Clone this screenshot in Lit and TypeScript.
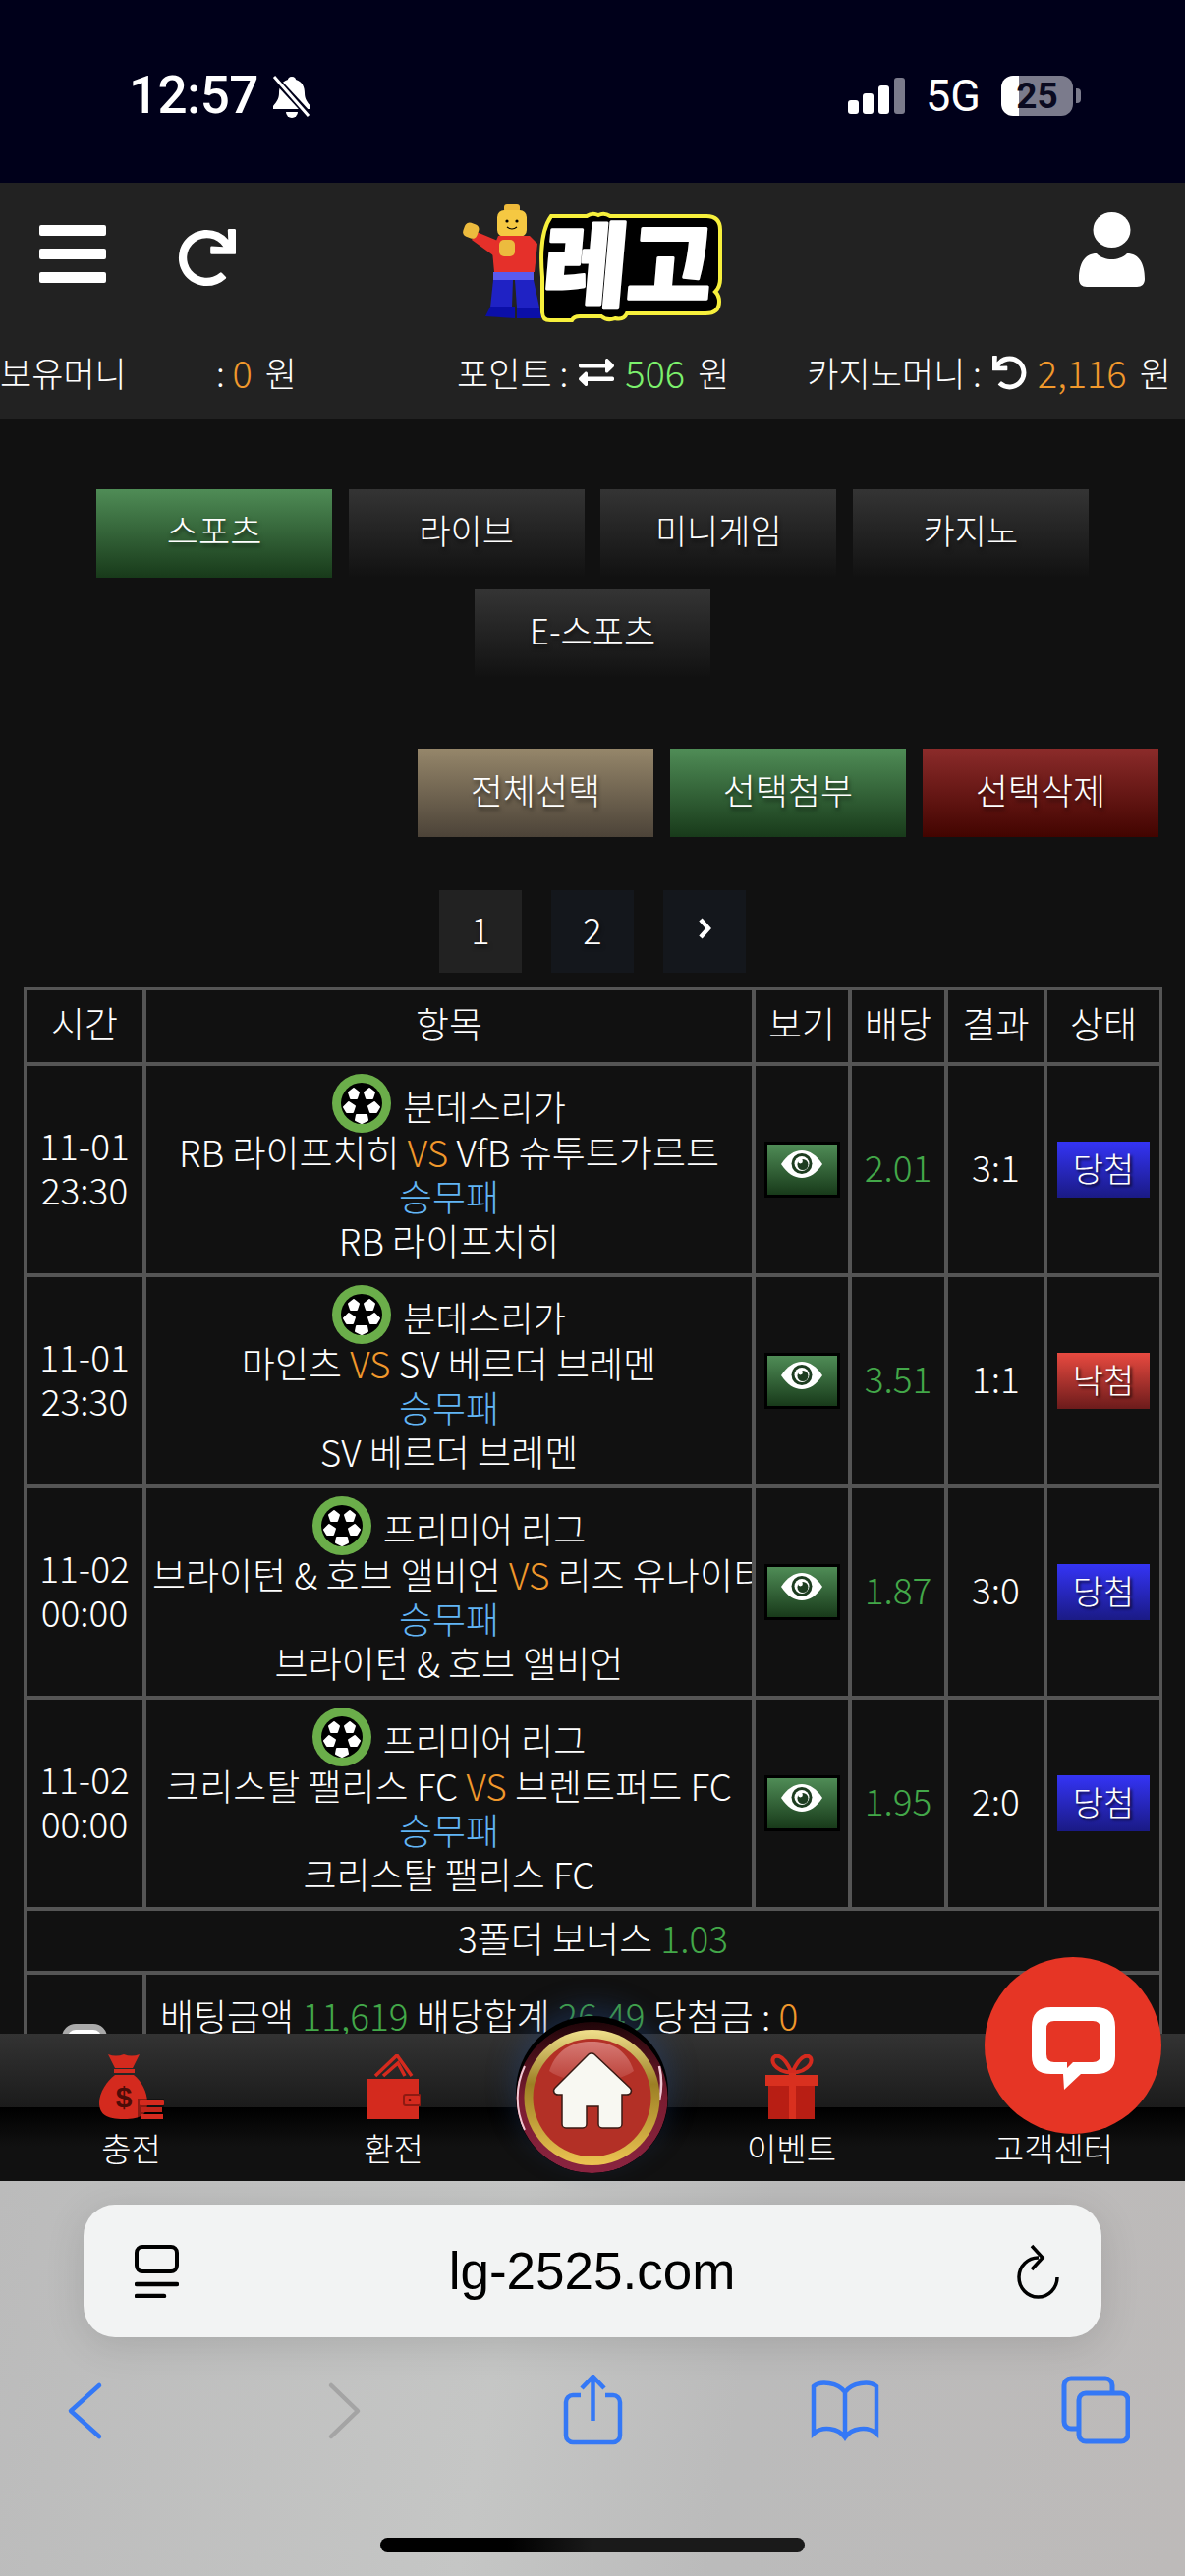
import { LitElement, html, css } from 'lit';
import { customElement } from 'lit/decorators.js';

const REDO = 'M500.33 0h-47.41a12 12 0 0 0-12 12.57l4 82.76A247.42 247.42 0 0 0 256 8C119.34 8 8.05 119.53 8 256.19 8 393 119.1 504 256 504a247.1 247.1 0 0 0 166.18-63.91 12 12 0 0 0 .48-17.43l-34-34a12 12 0 0 0-16.38-.55A176 176 0 1 1 402.1 157.8l-101.53-4.87a12 12 0 0 0-12.57 12v47.41a12 12 0 0 0 12 12h200.33a12 12 0 0 0 12-12V12a12 12 0 0 0-12-12z';

const ROWS = [
  { date: '11-01', time: '23:30', league: '분데스리가', home: 'RB 라이프치히', away: 'VfB 슈투트가르트', pick: 'RB 라이프치히', odds: '2.01', score: '3:1', won: true },
  { date: '11-01', time: '23:30', league: '분데스리가', home: '마인츠', away: 'SV 베르더 브레멘', pick: 'SV 베르더 브레멘', odds: '3.51', score: '1:1', won: false },
  { date: '11-02', time: '00:00', league: '프리미어 리그', home: '브라이턴 & 호브 앨비언', away: '리즈 유나이티드', pick: '브라이턴 & 호브 앨비언', odds: '1.87', score: '3:0', won: true },
  { date: '11-02', time: '00:00', league: '프리미어 리그', home: '크리스탈 팰리스 FC', away: '브렌트퍼드 FC', pick: '크리스탈 팰리스 FC', odds: '1.95', score: '2:0', won: true },
];

@customElement('app-root')
export class AppRoot extends LitElement {
  static styles = css`
    :host {
      display: block;
      width: 1206px;
      height: 2622px;
      overflow: hidden;
      position: relative;
      background: #111;
      color: #fff;
      font-family: "Noto Sans CJK KR", "Noto Sans", sans-serif;
      font-weight: 300;
      font-size: 35px;
      --orange: #f0982c;
      --green: #43a849;
    }
    svg { display: block; flex: none; }

    .status {
      height: 186px;
      background: #00001a;
      display: flex;
      align-items: flex-start;
      font-family: Roboto, sans-serif;
      font-weight: 500;
    }
    .clock { margin: 66px 0 0 131px; font-size: 53px; line-height: 62px; letter-spacing: -0.5px; }
    .bell { margin: 77px 0 0 14px; }
    .signal { margin: 79px 0 0 auto; }
    .net { margin: 72px 0 0 21px; font-size: 45px; line-height: 52px; font-weight: 400; }
    .battery {
      margin: 77px 0 0 21px;
      width: 73px;
      height: 41px;
      border-radius: 12px;
      background: linear-gradient(90deg, #fff 18px, #7b7b8c 18px);
      color: #0a0a20;
      font-size: 37px;
      font-weight: 700;
      line-height: 41px;
      text-align: center;
    }
    .nub { margin: 90px 106px 0 3px; width: 5px; height: 15px; border-radius: 0 4px 4px 0; background: #7b7b8c; }

    .header { height: 240px; background: #222; }
    .bar { height: 166px; display: grid; grid-template-columns: 1fr auto 1fr; align-items: start; }
    .bar-left { display: flex; align-items: flex-start; padding-left: 40px; }
    .menu { margin-top: 43px; width: 68px; display: flex; flex-direction: column; gap: 13px; }
    .menu i { display: block; height: 11px; background: #fff; border-radius: 2px; }
    .reload { margin: 47px 0 0 73px; }
    .logo { margin-top: 22px; overflow: visible; }
    .user { justify-self: end; margin: 30px 41px 0 0; }
    .money { height: 58px; display: flex; align-items: center; white-space: nowrap; line-height: 58px; padding-bottom: 4px; box-sizing: border-box; }
    .money > span { display: flex; align-items: center; }
    .money svg { margin: 0 11px; }
    .m1 .lbl { width: 220px; }
    .m2 { margin-left: 163px; }
    .m3 { margin-left: 79px; }
    .money b { font-weight: 300; font-size: 38px; margin: 0 13px 0 0; }
    .orange { color: var(--orange); }
    .lime { color: #7cf06c; }
    .green { color: var(--green); }
    .blue { color: #62b5f5; }

    .main { height: 1644px; overflow: hidden; }
    .tabs { padding: 72px 98px 0; display: flex; flex-wrap: wrap; justify-content: center; gap: 12px 16.6px; }
    .btn {
      width: 240px;
      height: 90px;
      display: flex;
      align-items: center;
      justify-content: center;
      padding-bottom: 9px;
      box-sizing: border-box;
      font-size: 35px;
      text-shadow: 1px 3px 4px rgba(0,0,0,.6);
    }
    .dark { background: linear-gradient(#343434, #111); }
    .grn { background: linear-gradient(#4f8c56, #183a1a); }
    .tan { background: linear-gradient(#95866a, #4c4338); }
    .red { background: linear-gradient(#8b2b2a, #420400); }
    .actions { margin-top: 72px; padding-right: 27px; display: flex; justify-content: flex-end; gap: 17px; }
    .actions .btn { font-size: 36px; }
    .pages { margin-top: 54px; display: flex; justify-content: center; gap: 30px; }
    .pages span {
      width: 84px;
      height: 84px;
      background: #14171c;
      display: flex;
      align-items: center;
      justify-content: center;
      padding-bottom: 6px;
      box-sizing: border-box;
      font-size: 36px;
      text-shadow: 1px 3px 4px rgba(0,0,0,.6);
    }
    .pages .on { background: #222; }

    table {
      margin: 15px 0 0 24px;
      width: 1159px;
      table-layout: fixed;
      border-collapse: separate;
      border-spacing: 0;
      border: 1px solid #555;
      font-size: 37px;
      line-height: 45px;
      text-align: center;
    }
    th, td { border: 2px solid #555; padding: 0; font-weight: 300; overflow: hidden; white-space: nowrap; }
    th { height: 77px; box-sizing: border-box; padding-bottom: 6px; }
    .txt { padding-bottom: 6px; }
    .game td { height: 215px; box-sizing: border-box; }
    .game .item { padding: 8px 6px 11px; }
    .league { height: 60px; margin-bottom: -3px; display: flex; justify-content: center; gap: 12px; line-height: 64px; font-size: 36px; }
    .eye { width: 77px; height: 57px; margin: 0 auto; box-sizing: border-box; border: 3px solid #000; background: linear-gradient(#4f8c56, #183a1a); display: flex; justify-content: center; padding-top: 6px; }
    .badge { width: 94px; height: 57px; margin: 0 0 0 10px; display: flex; align-items: center; justify-content: center; padding-bottom: 4px; box-sizing: border-box; font-size: 34px; text-shadow: 2px 2px 3px rgba(0,0,0,.8); }
    .won { background: linear-gradient(#3434f5, #1a1a85); }
    .lost { background: linear-gradient(#e84a40, #6c1b1b); }
    .bonus td { height: 65px; box-sizing: border-box; padding-bottom: 6px; }
    .sum td { vertical-align: top; height: 200px; box-sizing: border-box; }
    .sum .tot { text-align: left; padding: 19px 0 0 14px; }
    .check { width: 46px; height: 46px; margin: 50px 0 0 36px; box-sizing: border-box; border: 6px solid #aaa; border-radius: 14px; background: #fff; }

    .nav {
      height: 150px;
      position: relative;
      display: grid;
      grid-template-columns: 267px 267px 1fr 267px 267px;
      background: linear-gradient(#333 0, #1b1b1b 75px, #000 75px, #111 115px);
    }
    .nav a { display: flex; flex-direction: column; align-items: center; padding-top: 21px; font-size: 33px; line-height: 44px; gap: 7px; }
    .nav a svg { height: 66px; }
    .nav a.bare { padding-top: 94px; }
    .home { position: absolute; left: 525px; top: -12px; border-radius: 50%; background: #000; box-shadow: 0 -6px 0 #000, 0 -14px 30px rgba(35,70,130,.45); }
    .chat { position: absolute; left: 1002px; top: 1992px; width: 180px; height: 180px; border-radius: 50%; background: #e63525; display: flex; justify-content: center; padding-top: 51px; box-sizing: border-box; }

    .safari {
      height: 402px;
      background: linear-gradient(100deg, #bbbbbb, #c5c6c5 42%, #bbbbbb 62%, #bdbab9);
      display: flex;
      flex-direction: column;
    }
    .url {
      margin: 24px 0 0 85px;
      width: 1036px;
      height: 135px;
      border-radius: 32px;
      background: #f2f3f3;
      box-shadow: 0 8px 40px rgba(0,0,0,.12);
      display: grid;
      grid-template-columns: 1fr auto 1fr;
      align-items: center;
      padding: 0 43px 0 52px;
      box-sizing: border-box;
    }
    .url span { font-family: "Liberation Sans", sans-serif; font-weight: 400; font-size: 53px; color: #000; line-height: 60px; position: relative; left: -5px; }
    .url svg:last-child { justify-self: end; }
    .tools { margin-top: 38px; display: flex; }
    .t1 { margin-left: 51px; }
    .t2 { margin-left: 194px; }
    .t3 { margin-left: 183px; }
    .t4 { margin-left: 187px; }
    .t5 { margin-left: 185px; }
    .grabber { margin: 94px auto 0; width: 432px; height: 15px; border-radius: 8px; background: linear-gradient(90deg, #000 30%, #1a1a1a 50%); }
  `;

  ball() {
    return html`<svg width="60" height="60" viewBox="0 0 60 60">
      <circle cx="30" cy="30" r="30" fill="#6bae4a"/>
      <circle cx="30" cy="30" r="21" fill="#000"/>
      <g fill="#fff" stroke="#fff" stroke-width="2" stroke-linejoin="round">
        <polygon points="22,15 27,19 25,25 19,25 17,19"/>
        <polygon points="38,15 43,19 41,25 35,25 33,19"/>
        <polygon points="17,29 23,33 21,39 15,39 12,34"/>
        <polygon points="43,29 48,34 45,39 39,39 37,33"/>
        <polygon points="25,42 35,42 36,47 30,50 24,47"/>
      </g>
    </svg>`;
  }

  eye() {
    return html`<svg width="42" height="28" viewBox="0 0 42 28">
      <path d="M0 14C6 5 13 0 21 0s15 5 21 14c-6 9-13 14-21 14S6 23 0 14z" fill="#fff"/>
      <circle cx="21" cy="13.500" r="10.500" fill="#1d3d20"/>
      <circle cx="21" cy="13.500" r="7.500" fill="#fff"/>
      <circle cx="22" cy="14.500" r="5.500" fill="#1d3d20"/>
      <circle cx="19.500" cy="11" r="2.400" fill="#fff"/>
    </svg>`;
  }

  logo() {
    return html`<svg class="logo" width="265" height="117" viewBox="470 208 265 117">
      <path d="M560 220h36q6-4 12-1q6-3 12 1h98q14 0 14 14v50q0 8-5 13q4 4 4 10q0 12-14 12h-80q-3 7-12 5q-8 3-14-2h-22q-6 0-8 4h-22q-8 0-8-8v-36q-4-44 9-62z" fill="#000" stroke="#f7f03c" stroke-width="4"/>
      <text x="547" y="305" font-family="Noto Sans CJK KR" font-weight="900" font-size="94" fill="#fff" stroke="#fff" stroke-width="3" stroke-linejoin="round" textLength="172" lengthAdjust="spacingAndGlyphs" transform="skewX(-5) translate(29 0)">레고</text>
      <path d="M508 246l-24-10-5 8 22 16z" fill="#e5302a"/>
      <rect x="512" y="208" width="16" height="8" rx="3" fill="#eeb93a"/>
      <rect x="505" y="214" width="30" height="27" rx="7" fill="#f5c842"/>
      <circle cx="515" cy="225" r="1.600" fill="#000"/><circle cx="525" cy="225" r="1.600" fill="#000"/>
      <path d="M515 231q5 4 10 0" stroke="#000" stroke-width="1.200" fill="none"/>
      <path d="M506 240h32l8 8-3 29h-41l-2-22z" fill="#e5302a"/>
      <rect x="471" y="227" width="15" height="15" rx="5" fill="#ecbb3e" transform="rotate(20 478 234)"/>
      <rect x="507" y="244" width="16" height="17" rx="5" fill="#ecbb3e"/>
      <rect x="501" y="277" width="41" height="8" fill="#5a5aee"/>
      <path d="M501 285h20l-1 28h-22z" fill="#1f22c4"/>
      <path d="M523 285h19l6 28h-23z" fill="#1f22c4"/>
      <path d="M498 312h25v12l-30-2z" fill="#0b0fa8"/>
      <path d="M525 314h23l2 10h-25z" fill="#0b0fa8"/>
    </svg>`;
  }

  render() {
    return html`
      <div class="status">
        <span class="clock">12:57</span>
        <svg class="bell" width="40" height="43" viewBox="0 0 40 43">
          <path d="M20 1c3 0 4 2 4 3 7 2 9 8 9 14 0 6 3 9 6 13v3H1v-3c3-4 6-7 6-13 0-6 2-12 9-14 0-1 1-3 4-3z" fill="#fff"/>
          <path d="M14 37h12a6 6 0 0 1-12 0z" fill="#fff"/>
          <path d="M3 3l35 38" stroke="#00001a" stroke-width="7"/>
          <path d="M2 1l35 40" stroke="#fff" stroke-width="3"/>
        </svg>
        <svg class="signal" width="58" height="37" viewBox="0 0 58 37">
          <rect x="0" y="23" width="11" height="14" rx="3" fill="#fff"/>
          <rect x="15" y="16" width="11" height="21" rx="3" fill="#fff"/>
          <rect x="31" y="8" width="11" height="29" rx="3" fill="#fff"/>
          <rect x="47" y="0" width="11" height="37" rx="3" fill="#7b7b8c"/>
        </svg>
        <span class="net">5G</span>
        <span class="battery">25</span>
        <span class="nub"></span>
      </div>

      <div class="header">
        <div class="bar">
          <div class="bar-left">
            <div class="menu"><i></i><i></i><i></i></div>
            <svg class="reload" width="59" height="59" viewBox="0 0 512 512"><path d=${REDO} fill="#fff"/></svg>
          </div>
          ${this.logo()}
          <svg class="user" width="67" height="76" viewBox="0 0 67 76">
            <ellipse cx="33.500" cy="18" rx="19" ry="18" fill="#fff"/>
            <path d="M0 68C0 52 6 42 18 42c4 4 10 6 15.500 6S45 46 49 42c12 0 18 10 18 26 0 5-3 8-8 8H8c-5 0-8-3-8-8z" fill="#fff"/>
          </svg>
        </div>
        <div class="money">
          <span class="m1"><span class="lbl">보유머니</span>:&nbsp;<b class="orange">0</b>원</span>
          <span class="m2">포인트 :
            <svg width="36" height="36" viewBox="0 0 512 512" preserveAspectRatio="none"><path d="M0 168v-16c0-13.255 10.745-24 24-24h360V80c0-21.367 25.899-32.042 40.971-16.971l80 80c9.372 9.373 9.372 24.569 0 33.941l-80 80C409.956 271.982 384 261.456 384 240v-48H24c-13.255 0-24-10.745-24-24zm488 152H128v-48c0-21.314-25.862-32.08-40.971-16.971l-80 80c-9.372 9.373-9.372 24.569 0 33.941l80 80C102.057 463.997 128 453.437 128 432v-48h360c13.255 0 24-10.745 24-24v-16c0-13.255-10.745-24-24-24z" fill="#fff"/></svg>
            <b class="lime">506</b>원</span>
          <span class="m3">카지노머니 :
            <svg width="35" height="35" viewBox="0 0 512 512"><path d=${REDO} fill="#fff" transform="matrix(-1 0 0 1 512 0)"/></svg>
            <b class="orange">2,116</b>원</span>
        </div>
      </div>

      <div class="main">
        <div class="tabs">
          <span class="btn grn">스포츠</span>
          <span class="btn dark">라이브</span>
          <span class="btn dark">미니게임</span>
          <span class="btn dark">카지노</span>
          <span class="btn dark">E-스포츠</span>
        </div>
        <div class="actions">
          <span class="btn tan">전체선택</span>
          <span class="btn grn">선택첨부</span>
          <span class="btn red">선택삭제</span>
        </div>
        <div class="pages">
          <span class="on">1</span>
          <span>2</span>
          <span><svg width="14" height="22" viewBox="0 0 14 22"><path d="M3 2l8 9-8 9" stroke="#fff" stroke-width="4.500" fill="none"/></svg></span>
        </div>
        <table>
          <colgroup>
            <col style="width:122px"><col style="width:620px"><col style="width:98px">
            <col style="width:98px"><col style="width:101px"><col style="width:118px">
          </colgroup>
          <tr><th>시간</th><th>항목</th><th>보기</th><th>배당</th><th>결과</th><th>상태</th></tr>
          ${ROWS.map((r) => html`
            <tr class="game">
              <td class="txt">${r.date}<br>${r.time}</td>
              <td class="item">
                <div class="league">${this.ball()}<span>${r.league}</span></div>
                <div>${r.home} <span class="orange">VS</span> ${r.away}</div>
                <div class="blue">승무패</div>
                <div>${r.pick}</div>
              </td>
              <td><div class="eye">${this.eye()}</div></td>
              <td class="txt green">${r.odds}</td>
              <td class="txt">${r.score}</td>
              <td><div class="badge ${r.won ? 'won' : 'lost'}">${r.won ? '당첨' : '낙첨'}</div></td>
            </tr>`)}
          <tr class="bonus"><td colspan="6">3폴더 보너스 <span class="green">1.03</span></td></tr>
          <tr class="sum">
            <td><div class="check"></div></td>
            <td class="tot" colspan="5">배팅금액 <span class="green">11,619</span> 배당합계 <span class="green">26.49</span> 당첨금 : <span class="orange">0</span></td>
          </tr>
        </table>
      </div>

      <div class="nav">
        <a><svg width="67" viewBox="0 0 67 66">
            <path d="M10 0q8 3 16 0q8 3 16 0l-7 14H17z" fill="#d42a1e"/>
            <rect x="16" y="15" width="21" height="4" fill="#d42a1e"/>
            <path d="M17 21h19c8 6 14 18 14 28 0 12-6 17-24 17S1 61 1 49c0-10 8-22 16-28z" fill="#d42a1e"/>
            <text x="26" y="54" font-family="Liberation Sans" font-size="30" font-weight="700" fill="#4c0c08" text-anchor="middle">$</text>
            <rect x="40" y="45" width="27" height="21" fill="#000" opacity=".35"/>
            <rect x="42" y="47" width="25" height="5" rx="1" fill="#d42a1e"/>
            <rect x="44" y="54" width="21" height="5" fill="#c0241a"/>
            <rect x="44" y="61" width="22" height="5" fill="#d42a1e"/>
          </svg>충전</a>
        <a><svg width="54" viewBox="0 0 54 66">
            <path d="M8 22L30 1l15 21M16 22L31 9l7 13" fill="none" stroke="#d42a1e" stroke-width="3.500"/>
            <path d="M0 25h52v41H0z" fill="#d42a1e"/>
            <rect x="37" y="41" width="17" height="11" rx="2" fill="#d42a1e" stroke="#8e1a12" stroke-width="2"/>
            <circle cx="43" cy="46.500" r="1.500" fill="#5c0d0a"/>
          </svg>환전</a>
        <span></span>
        <a><svg width="54" viewBox="0 0 54 66">
            <path d="M27 19C22 8 16 0 10 2c-6 3-2 15 17 17zm0 0C32 8 38 0 44 2c6 3 2 15-17 17z" fill="none" stroke="#d42a1e" stroke-width="4"/>
            <rect x="0" y="21" width="54" height="11" fill="#d9301f"/>
            <rect x="3" y="32" width="47" height="34" fill="#b81e14"/>
            <rect x="24" y="19" width="7" height="47" fill="#d9301f"/>
          </svg>이벤트</a>
        <a class="bare">고객센터</a>
        <svg class="home" width="155" height="154" viewBox="0 0 155 154">
          <defs>
            <linearGradient id="rim" x1="0" y1="0" x2="0" y2="1"><stop offset="0" stop-color="#1f0508"/><stop offset=".5" stop-color="#7a1c30"/><stop offset="1" stop-color="#8a2440"/></linearGradient>
            <linearGradient id="gold" x1="0" y1="0" x2="0" y2="1"><stop offset="0" stop-color="#f0e08c"/><stop offset=".4" stop-color="#9c7f24"/><stop offset="1" stop-color="#ecc452"/></linearGradient>
            <linearGradient id="gloss" x1="0" y1="0" x2="0" y2="1"><stop offset="0" stop-color="#d67a74"/><stop offset="1" stop-color="#bb4038"/></linearGradient>
          </defs>
          <circle cx="77.500" cy="77" r="77" fill="url(#rim)"/>
          <path d="M9 45A76 76 0 0 0 9 110" stroke="#f0c8d4" stroke-width="2" fill="none"/>
          <path d="M146 45A76 76 0 0 1 146 80" stroke="#f0c8d4" stroke-width="2.500" fill="none"/>
          <circle cx="77.500" cy="77" r="69" fill="url(#gold)"/>
          <circle cx="77.500" cy="77" r="60" fill="#b33026"/>
          <path d="M34 50C42 26 60 20 77 20s35 6 43 30c-18 14-68 14-86 0z" fill="url(#gloss)"/>
          <path d="M77 32a4 4 0 0 1 3 1l36 34c3 3 1 7-3 7h-5v30a4 4 0 0 1-4 4H88a4 4 0 0 1-4-4V86H72v18a4 4 0 0 1-4 4H51a4 4 0 0 1-4-4V74h-4c-4 0-6-4-3-7l34-34a4 4 0 0 1 3-1z" fill="#f8f8f2" stroke="#3a1a14" stroke-width="1.500"/>
        </svg>
      </div>

      <div class="safari">
        <div class="url">
          <svg width="45" height="54" viewBox="0 0 45 54">
            <rect x="2" y="2" width="41" height="25" rx="6" fill="none" stroke="#000" stroke-width="4"/>
            <path d="M2 40h41M2 52h28" stroke="#000" stroke-width="4.500" stroke-linecap="round"/>
          </svg>
          <span>lg-2525.com</span>
          <svg width="44" height="56" viewBox="0 0 44 56">
            <path d="M23 14A19.500 20 0 1 0 42 34" fill="none" stroke="#000" stroke-width="3.500"/>
            <path d="M16 2l11 12-11 12" fill="none" stroke="#000" stroke-width="3.500"/>
          </svg>
        </div>
        <div class="tools">
          <svg class="t1" width="70" height="72" viewBox="0 0 70 72"><path d="M50 11L21 37l29 26" fill="none" stroke="#3478f6" stroke-width="4.500" stroke-linecap="round" stroke-linejoin="round"/></svg>
          <svg class="t2" width="70" height="72" viewBox="0 0 70 72"><path d="M22 11l27 26-27 26" fill="none" stroke="#a4a4a4" stroke-width="4.500" stroke-linecap="round" stroke-linejoin="round"/></svg>
          <svg class="t3" width="70" height="72" viewBox="0 0 70 72"><path d="M23 21h-8a7 7 0 0 0-7 7v34a7 7 0 0 0 7 7h41a7 7 0 0 0 7-7V28a7 7 0 0 0-7-7h-8M35.500 2v45M24 14L35.500 2 47 14" fill="none" stroke="#3478f6" stroke-width="4.500"/></svg>
          <svg class="t4" width="70" height="72" viewBox="0 0 70 72"><path d="M35 18C28 8 10 6 3 12v48c9-8 25-6 32 4 7-10 23-12 32-4V12c-7-6-25-4-32 6zm0 0v46" fill="none" stroke="#3478f6" stroke-width="4.500"/></svg>
          <svg class="t5" width="70" height="72" viewBox="0 0 70 72">
            <path d="M16 55h-6a7 7 0 0 1-7-7V11a7 7 0 0 1 7-7h35a7 7 0 0 1 7 7v8" fill="none" stroke="#3478f6" stroke-width="5"/>
            <rect x="18" y="19" width="50" height="49" rx="7" fill="none" stroke="#3478f6" stroke-width="5"/>
          </svg>
        </div>
        <div class="grabber"></div>
      </div>

      <div class="chat">
        <svg width="85" height="84" viewBox="0 0 85 84">
          <path fill-rule="evenodd" d="M20 0h45q20 0 20 20v30q0 18-20 18H50L33 84 32 68H20Q0 68 0 50V20Q0 0 20 0zm3 14q-8 0-8 8v26q0 8 8 8h13v6l6-6h20q8 0 8-8V22q0-8-8-8z" fill="#fff"/>
        </svg>
      </div>
    `;
  }
}
